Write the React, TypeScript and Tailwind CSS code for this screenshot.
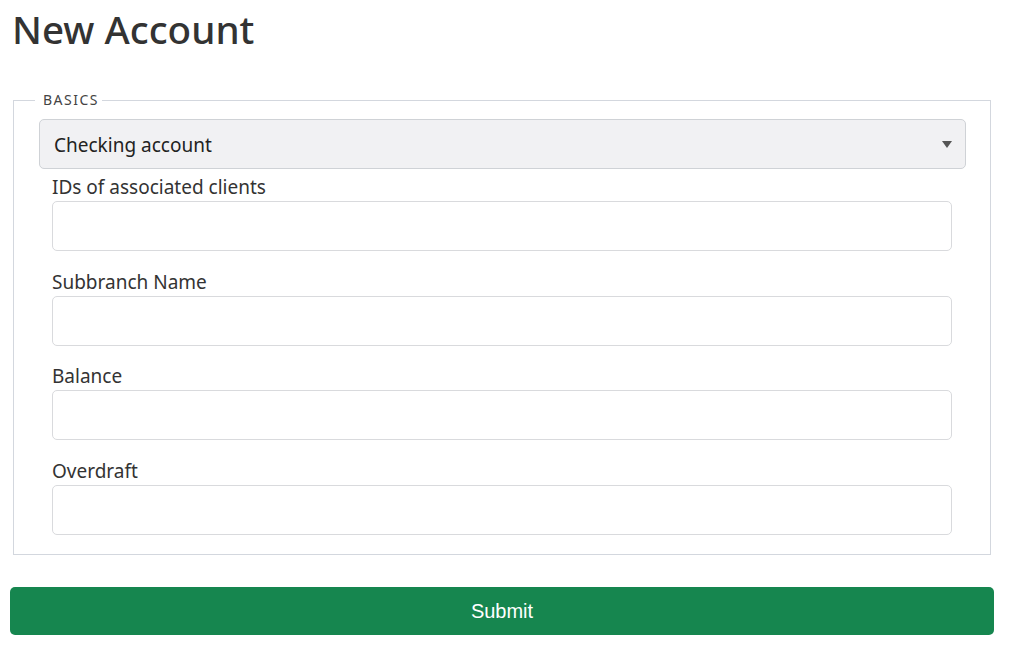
export default function App() {
  const fields = ["IDs of associated clients", "Subbranch Name", "Balance", "Overdraft"];
  return (
    <div
      className="w-[1004px] pl-[10px] pr-[10px] pt-[5px] pb-8 text-[#333333]"
      style={{ fontFamily: '"Noto Sans", "Open Sans", sans-serif' }}
    >
      <h1 className="ml-[2px] text-[38.6px] leading-[48px] font-medium">New Account</h1>
      <form className="mt-[38px]">
        <fieldset className="mx-[3px] border border-[#d3d7de] pl-[25px] pr-[24px] pb-[19px]">
          <legend className="-ml-[4px] pl-[8px] pr-[3px] text-[14px] leading-[18px] tracking-[1.5px] text-[#444]">
            BASICS
          </legend>
          <div className="relative mt-[10px]">
            <select className="h-[50px] w-full appearance-none rounded-[5px] border border-[#cfd2d6] bg-[#f1f1f3] pl-[14px] pt-[3px] text-[19px] text-[#222] outline-none">
              <option>Checking account</option>
            </select>
            <svg
              className="pointer-events-none absolute right-[14px] top-[22px]"
              width="10"
              height="7"
              viewBox="0 0 10 7"
            >
              <path d="M0 0 H10 L5 7 Z" fill="#555" />
            </svg>
          </div>
          <div className="ml-[13px] mr-[14px]">
            {fields.map((f, i) => (
              <div key={f} className={i === 0 ? "mt-[5px]" : "mt-[17.5px]"}>
                <label className="block text-[19px] leading-[27px] text-[#333]">{f}</label>
                <input
                  type="text"
                  className="block h-[50px] w-full rounded-[5px] border border-[#d9dadd] bg-white outline-none"
                />
              </div>
            ))}
          </div>
        </fieldset>
        <button
          type="button"
          className="mt-[32px] h-[48px] w-full rounded-[5px] bg-[#16864f] text-[20px] text-white"
          style={{ fontFamily: '"Liberation Sans", Arial, sans-serif' }}
        >
          Submit
        </button>
      </form>
    </div>
  );
}
